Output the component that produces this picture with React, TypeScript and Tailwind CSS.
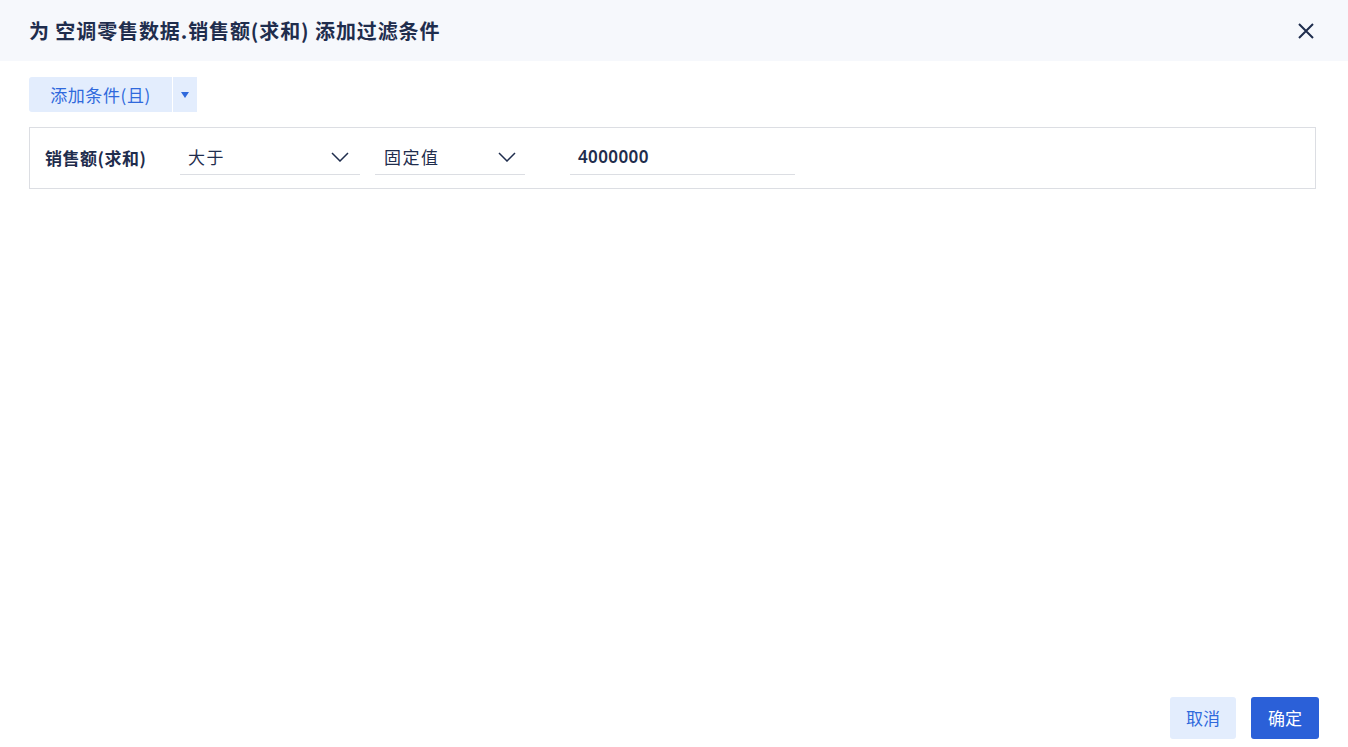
import React from "react";

const font = { fontFamily: '"Noto Sans CJK SC", "Noto Sans", sans-serif' };

function Chevron() {
  return (
    <svg width="18" height="10" viewBox="0 0 18 10" fill="none">
      <path d="M1 1l8 8 8-8" stroke="#1f2d4d" strokeWidth="1.5" />
    </svg>
  );
}

export default function App() {
  return (
    <div className="w-[1348px] h-[747px] bg-white flex flex-col" style={font}>
      <div className="h-[61px] bg-[#f6f8fc] flex items-center justify-between pl-[29px] pr-[33px] shrink-0">
        <div className="text-[20px] tracking-[0.9px] font-bold text-[#1f2d4d]">为 空调零售数据.销售额(求和) 添加过滤条件</div>
        <svg width="18" height="18" viewBox="0 0 18 18" fill="none">
          <path d="M2 2l14 14M16 2L2 16" stroke="#1f2d4d" strokeWidth="2" />
        </svg>
      </div>
      <div className="flex-1 flex flex-col px-[29px] pt-[16px]">
        <div className="flex h-[35px] w-[168px]">
          <div className="w-[143px] bg-[#e3edfd] rounded-l-[3px] flex items-center justify-center text-[17px] tracking-[0.6px] text-[#2f69dc]">
            添加条件(且)
          </div>
          <div className="w-px bg-white" />
          <div className="w-[24px] bg-[#e3edfd] flex items-center justify-center">
            <svg width="8" height="6" viewBox="0 0 8 6"><path d="M0 0h8L4 6z" fill="#2f69dc" /></svg>
          </div>
        </div>
        <div className="mt-[15px] w-[1287px] h-[62px] border border-[#dcdee3] flex items-start pt-[12px] pl-[15px]">
          <div className="w-[135px] h-[35px] flex items-center text-[17px] tracking-[0.5px] font-bold text-[#1f2d4d]">销售额(求和)</div>
          <div className="w-[180px] h-[35px] border-b border-[#dcdee3] flex items-center justify-between pl-[8px] pr-[11px]">
            <span className="text-[17px] tracking-[1.5px] text-[#1f2d4d]">大于</span>
            <Chevron />
          </div>
          <div className="ml-[15px] w-[150px] h-[35px] border-b border-[#dcdee3] flex items-center justify-between pl-[9px] pr-[9px]">
            <span className="text-[17px] tracking-[1.5px] text-[#1f2d4d]">固定值</span>
            <Chevron />
          </div>
          <div className="ml-[45px] w-[225px] h-[35px] border-b border-[#dcdee3] flex items-center pl-[8px]">
            <span className="text-[17px] tracking-[0.4px] font-semibold text-[#1f2d4d]" style={{ fontFamily: '"Noto Sans", sans-serif' }}>4000000</span>
          </div>
        </div>
        <div className="flex-1" />
        <div className="flex justify-end gap-[15px] pb-[8px]">
          <div className="w-[66px] h-[42px] bg-[#e3edfd] rounded-[3px] flex items-center justify-center text-[17px] text-[#2f69dc]">取消</div>
          <div className="w-[68px] h-[42px] bg-[#2b60d8] rounded-[3px] flex items-center justify-center text-[17px] text-white">确定</div>
        </div>
      </div>
    </div>
  );
}
